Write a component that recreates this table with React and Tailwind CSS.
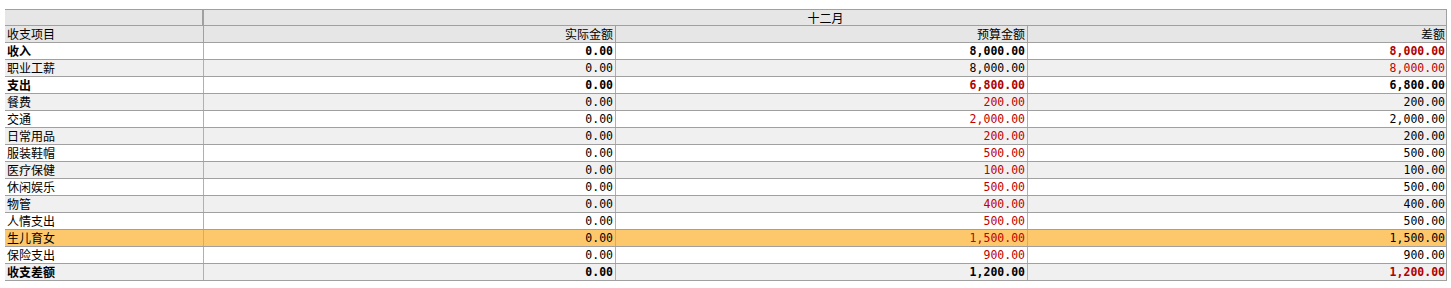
import React from "react";

const rows = [
  { name: "收入", actual: "0.00", budget: "8,000.00", diff: "8,000.00", bold: true, red: [false, false, true] },
  { name: "职业工薪", actual: "0.00", budget: "8,000.00", diff: "8,000.00", red: [false, false, true] },
  { name: "支出", actual: "0.00", budget: "6,800.00", diff: "6,800.00", bold: true, red: [false, true, false] },
  { name: "餐费", actual: "0.00", budget: "200.00", diff: "200.00", red: [false, true, false] },
  { name: "交通", actual: "0.00", budget: "2,000.00", diff: "2,000.00", red: [false, true, false] },
  { name: "日常用品", actual: "0.00", budget: "200.00", diff: "200.00", red: [false, true, false] },
  { name: "服装鞋帽", actual: "0.00", budget: "500.00", diff: "500.00", red: [false, true, false] },
  { name: "医疗保健", actual: "0.00", budget: "100.00", diff: "100.00", red: [false, true, false] },
  { name: "休闲娱乐", actual: "0.00", budget: "500.00", diff: "500.00", red: [false, true, false] },
  { name: "物管", actual: "0.00", budget: "400.00", diff: "400.00", red: [false, true, false] },
  { name: "人情支出", actual: "0.00", budget: "500.00", diff: "500.00", red: [false, true, false] },
  { name: "生儿育女", actual: "0.00", budget: "1,500.00", diff: "1,500.00", red: [false, true, false], selected: true },
  { name: "保险支出", actual: "0.00", budget: "900.00", diff: "900.00", red: [false, true, false] },
  { name: "收支差额", actual: "0.00", budget: "1,200.00", diff: "1,200.00", bold: true, red: [false, false, true] },
];

const cjk = "font-['SimSun','Noto_Sans_CJK_SC',sans-serif] text-[12px] leading-[16px]";
const mono = "font-['DejaVu_Sans_Mono','Noto_Sans_CJK_SC',monospace] text-[11.5px] leading-[16px]";

function NumCell({ value, red, bold, last }) {
  return (
    <div
      className={`${mono} flex items-center justify-end pr-[2px] ${last ? "" : "border-r border-[#b0b0b0]"} ${
        red ? (bold ? "text-[#b00000]" : "text-[#c00000]") : "text-black"
      } ${bold ? "font-bold" : ""}`}
    >
      {value}
    </div>
  );
}

export default function App() {
  return (
    <div className="w-[1451px] h-[288px] bg-white pt-[9px] pl-[5px]">
      <div className="w-[1442px] border-t border-r border-[#a0a0a0]">
        {/* header: month */}
        <div className="grid grid-cols-[199px_1243px] h-[16px] bg-[#e6e6e6] border-b border-[#a0a0a0]">
          <div className="border-r border-[#a0a0a0] mr-[1px]" />
          <div className={`${cjk} flex items-center justify-center border-l border-[#a0a0a0] -ml-[1px]`}>十二月</div>
        </div>

        {/* header: column titles */}
        <div className="grid grid-cols-[199px_412px_412px_419px] h-[17px] bg-[#e6e6e6] border-b border-[#a0a0a0]">
          <div className={`${cjk} flex items-center pl-[2px] border-r border-[#a0a0a0]`}>收支项目</div>
          <div className={`${cjk} flex items-center justify-end pr-[2px] border-r border-[#a0a0a0]`}>实际金额</div>
          <div className={`${cjk} flex items-center justify-end pr-[2px] border-r border-[#a0a0a0]`}>预算金额</div>
          <div className={`${cjk} flex items-center justify-end pr-[2px]`}>差额</div>
        </div>

        {rows.map((r, i) => (
          <div
            key={r.name}
            className={`grid grid-cols-[199px_412px_412px_419px] h-[17px] border-b border-[#a0a0a0] ${
              r.selected ? "bg-[#fdc86c]" : i % 2 === 0 ? "bg-white" : "bg-[#f0f0f0]"
            }`}
          >
            <div className={`${cjk} flex items-center pl-[2px] border-r border-[#b0b0b0] ${r.bold ? "font-bold" : ""}`}>
              {r.name}
            </div>
            <NumCell value={r.actual} red={r.red[0]} bold={r.bold} />
            <NumCell value={r.budget} red={r.red[1]} bold={r.bold} />
            <NumCell value={r.diff} red={r.red[2]} bold={r.bold} last />
          </div>
        ))}
      </div>
    </div>
  );
}
